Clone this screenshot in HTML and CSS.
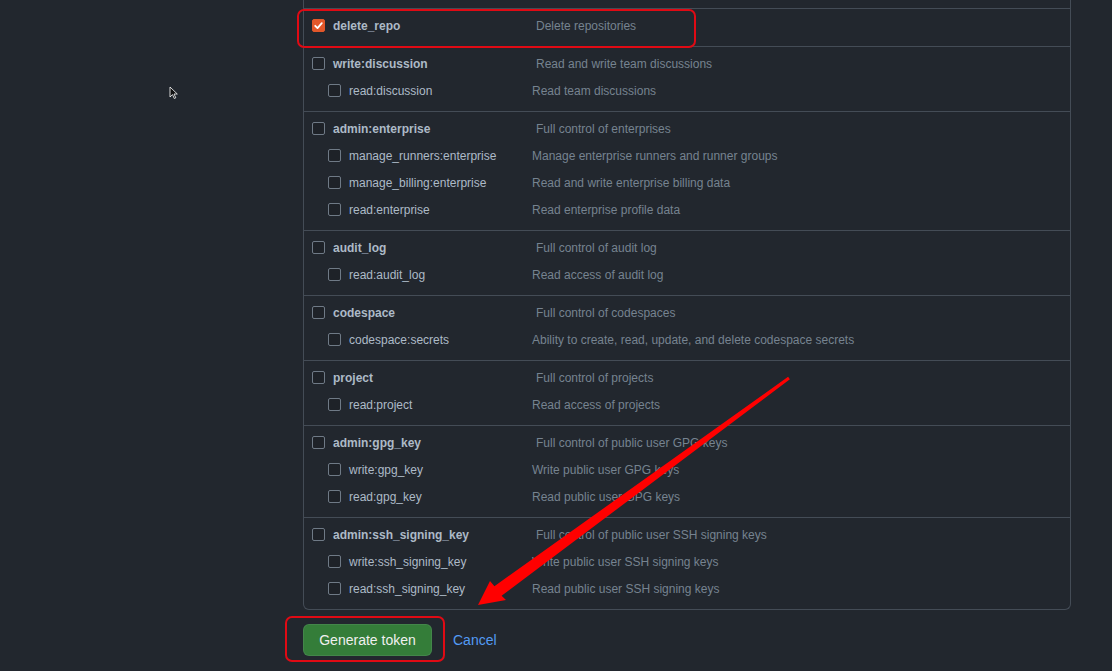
FILE: index.html
```html
<!DOCTYPE html>
<html>
<head>
<meta charset="utf-8">
<link rel="stylesheet" href="styles.css">
</head>
<body>
<div class="page">
  <div class="panel">
    <div class="filler"></div>
    <div class="section">
      <div class="row top"><span class="cb checked"><svg viewBox="0 0 13 13" width="13" height="13"><path d="M3.2 6.8l2.3 2.3 4.3-5" fill="none" stroke="#fff" stroke-width="1.8" stroke-linecap="round" stroke-linejoin="round"/></svg></span><span class="label">delete_repo</span><span class="desc">Delete repositories</span></div>
    </div>
    <div class="section">
      <div class="row top"><span class="cb"></span><span class="label">write:discussion</span><span class="desc">Read and write team discussions</span></div>
      <div class="row child"><span class="cb"></span><span class="label">read:discussion</span><span class="desc">Read team discussions</span></div>
    </div>
    <div class="section">
      <div class="row top"><span class="cb"></span><span class="label">admin:enterprise</span><span class="desc">Full control of enterprises</span></div>
      <div class="row child"><span class="cb"></span><span class="label">manage_runners:enterprise</span><span class="desc">Manage enterprise runners and runner groups</span></div>
      <div class="row child"><span class="cb"></span><span class="label">manage_billing:enterprise</span><span class="desc">Read and write enterprise billing data</span></div>
      <div class="row child"><span class="cb"></span><span class="label">read:enterprise</span><span class="desc">Read enterprise profile data</span></div>
    </div>
    <div class="section">
      <div class="row top"><span class="cb"></span><span class="label">audit_log</span><span class="desc">Full control of audit log</span></div>
      <div class="row child"><span class="cb"></span><span class="label">read:audit_log</span><span class="desc">Read access of audit log</span></div>
    </div>
    <div class="section">
      <div class="row top"><span class="cb"></span><span class="label">codespace</span><span class="desc">Full control of codespaces</span></div>
      <div class="row child"><span class="cb"></span><span class="label">codespace:secrets</span><span class="desc">Ability to create, read, update, and delete codespace secrets</span></div>
    </div>
    <div class="section">
      <div class="row top"><span class="cb"></span><span class="label">project</span><span class="desc">Full control of projects</span></div>
      <div class="row child"><span class="cb"></span><span class="label">read:project</span><span class="desc">Read access of projects</span></div>
    </div>
    <div class="section">
      <div class="row top"><span class="cb"></span><span class="label">admin:gpg_key</span><span class="desc">Full control of public user GPG keys</span></div>
      <div class="row child"><span class="cb"></span><span class="label">write:gpg_key</span><span class="desc">Write public user GPG keys</span></div>
      <div class="row child"><span class="cb"></span><span class="label">read:gpg_key</span><span class="desc">Read public user GPG keys</span></div>
    </div>
    <div class="section">
      <div class="row top"><span class="cb"></span><span class="label">admin:ssh_signing_key</span><span class="desc">Full control of public user SSH signing keys</span></div>
      <div class="row child"><span class="cb"></span><span class="label">write:ssh_signing_key</span><span class="desc">Write public user SSH signing keys</span></div>
      <div class="row child"><span class="cb"></span><span class="label">read:ssh_signing_key</span><span class="desc">Read public user SSH signing keys</span></div>
    </div>
  </div>
  <div class="actions">
    <button class="btn-primary">Generate token</button>
    <a class="cancel" href="#">Cancel</a>
  </div>
</div>
<svg class="overlay" width="1112" height="671" viewBox="0 0 1112 671">
  <rect x="298" y="10" width="397" height="37" rx="6" fill="none" stroke="#e00a14" stroke-width="2"/>
  <rect x="286" y="617" width="158" height="44" rx="6" fill="none" stroke="#e00a14" stroke-width="2"/>
  <polygon points="788.1,376.8 494.4,586.2 490,581 478,605 506,600 501.6,595.8 789.9,379.2" fill="#ff0000"/>
  <polygon points="170,87 170,97 172.5,94.6 174.3,98.5 175.8,97.8 174,94 177.3,94" fill="#111" stroke="#fff" stroke-width="0.8" stroke-linejoin="round"/>
</svg>
</body>
</html>
```
FILE: styles.css
```css
html, body {
  margin: 0;
  padding: 0;
  background: #22272e;
  overflow: hidden;
}
body {
  font-family: "Liberation Sans", Arial, sans-serif;
  font-size: 12px;
  color: #adbac7;
}
.page {
  padding-left: 303px;
  width: 768px;
}
.panel {
  border: 1px solid #444c56;
  border-top: none;
  border-radius: 0 0 6px 6px;
}
.filler {
  height: 8px;
}
.section {
  border-top: 1px solid #444c56;
  padding: 3px 0 7px;
}
.row {
  display: flex;
  align-items: center;
  height: 27px;
}
.row.top {
  padding-left: 8px;
}
.row.child {
  padding-left: 24px;
}
.cb {
  width: 13px;
  height: 13px;
  box-sizing: border-box;
  border: 1.5px solid #6f7a86;
  border-radius: 2px;
  margin-right: 8px;
  flex: none;
  display: flex;
  background: #1e2228;
}
.cb.checked {
  background: #e2572a;
  border-color: #e2572a;
}
.cb.checked svg {
  margin: -1.5px;
}
.label {
  flex: none;
}
.row.top .label {
  width: 203px;
  font-weight: bold;
}
.row.child .label {
  width: 183px;
}
.desc {
  color: #768390;
}
.actions {
  display: flex;
  align-items: center;
  margin-top: 14px;
  gap: 21px;
}
.btn-primary {
  height: 32px;
  width: 129px;
  background: #347d39;
  color: #f0f0f0;
  border: 1px solid rgba(205, 217, 229, 0.1);
  border-radius: 6px;
  font-family: "Liberation Sans", Arial, sans-serif;
  font-size: 14px;
  padding: 0;
}
.cancel {
  color: #539bf5;
  font-size: 14px;
  text-decoration: none;
}
.overlay {
  position: absolute;
  left: 0;
  top: 0;
  pointer-events: none;
}
```
